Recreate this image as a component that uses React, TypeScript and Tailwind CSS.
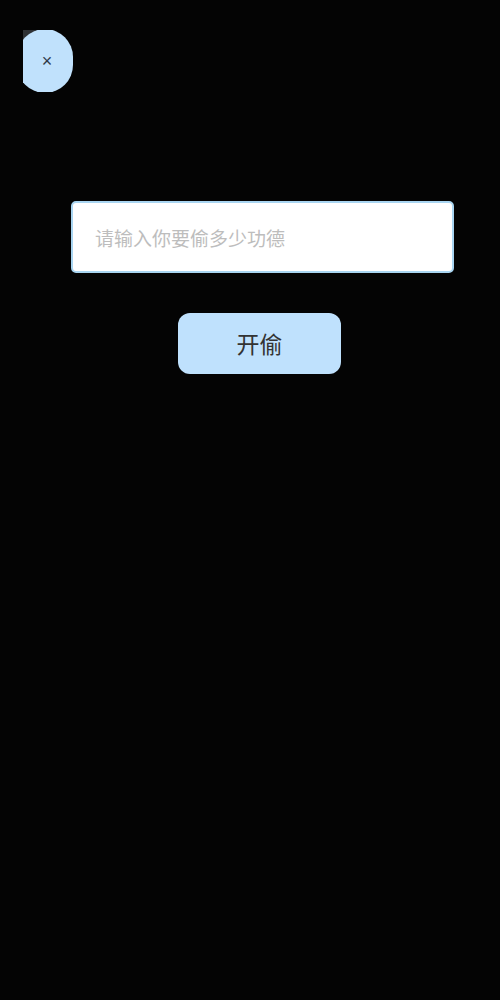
export default function App() {
  return (
    <div
      className="flex min-h-[1000px] w-[500px] flex-col bg-[#040404]"
      style={{ fontFamily: '"Liberation Sans", "Noto Sans CJK SC", sans-serif' }}
    >
      <div className="pl-[23px] pt-[30px]">
        <div className="relative h-[62px] w-[50px] overflow-hidden">
          <div className="absolute left-0 top-0 h-[10px] w-[12px] bg-[#2e3134]" />
          <button className="absolute -left-[6px] -top-[1px] flex h-[64px] w-[56px] items-center justify-center rounded-full bg-[#c0e1fc] pl-[4px] text-[18px] text-[#2f3a48]">
            ×
          </button>
        </div>
      </div>
      <div className="mt-[109px] flex flex-col items-center">
        <div className="ml-[25px] flex h-[72px] w-[383px] items-center rounded-[5px] border-2 border-[#a9d5f1] bg-white px-[22px] pt-[6px]">
          <input
            className="w-full bg-transparent text-[19px] text-[#333] outline-none placeholder:text-[#bdbdbd]"
            placeholder="请输入你要偷多少功德"
          />
        </div>
        <button className="ml-[19px] mt-[40px] flex h-[61px] w-[163px] items-center justify-center rounded-[12px] bg-[#bfe1fd] pt-[4px] text-[23px] text-[#333]">
          开偷
        </button>
      </div>
    </div>
  );
}
